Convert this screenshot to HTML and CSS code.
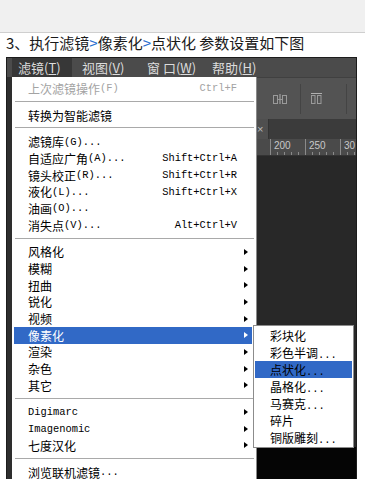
FILE: index.html
```html
<!DOCTYPE html>
<html lang="zh">
<head>
    <meta charset="UTF-8">
    <title>像素化 - 点状化</title>
    <link rel="stylesheet" href="styles.css">
</head>
<body>

    <div class="topband"></div>
    <p class="caption">3、执行滤镜<span class="gt">&gt;</span>像素化<span class="gt">&gt;</span>点状化 参数设置如下图</p>

    <div class="shot">
        <div class="menubar">
            <span class="mb-item active">滤镜(<u>T</u>)</span>
            <span class="mb-item">视图(<u>V</u>)</span>
            <span class="mb-item">窗 口(<u>W</u>)</span>
            <span class="mb-item">帮助(<u>H</u>)</span>
        </div>

        <div class="work">
            <div class="tools"></div>

            <!-- Filter menu -->
            <div class="menu">
                <div class="mi off">上次滤镜操作<span class="lat">(F)</span><span class="key">Ctrl+F</span></div>
                <div class="sep"></div>
                <div class="mi">转换为智能滤镜</div>
                <div class="sep"></div>
                <div class="mi">滤镜库 <span class="lat">(G)...</span></div>
                <div class="mi">自适应广角 <span class="lat">(A)...</span><span class="key">Shift+Ctrl+A</span></div>
                <div class="mi">镜头校正 <span class="lat">(R)...</span><span class="key">Shift+Ctrl+R</span></div>
                <div class="mi">液化 <span class="lat">(L)...</span><span class="key">Shift+Ctrl+X</span></div>
                <div class="mi">油画 <span class="lat">(O)...</span></div>
                <div class="mi">消失点 <span class="lat">(V)...</span><span class="key">Alt+Ctrl+V</span></div>
                <div class="sep"></div>
                <div class="mi">风格化<i class="arrow"></i></div>
                <div class="mi">模糊<i class="arrow"></i></div>
                <div class="mi">扭曲<i class="arrow"></i></div>
                <div class="mi">锐化<i class="arrow"></i></div>
                <div class="mi">视频<i class="arrow"></i></div>
                <div class="mi hl">像素化<i class="arrow"></i></div>
                <div class="mi">渲染<i class="arrow"></i></div>
                <div class="mi">杂色<i class="arrow"></i></div>
                <div class="mi">其它<i class="arrow"></i></div>
                <div class="sep"></div>
                <div class="mi"><span class="lat">Digimarc</span><i class="arrow"></i></div>
                <div class="mi"><span class="lat">Imagenomic</span><i class="arrow"></i></div>
                <div class="mi">七度汉化<i class="arrow"></i></div>
                <div class="sep"></div>
                <div class="mi">浏览联机滤镜<span class="lat">...</span></div>
            </div>

            <!-- Workspace on the right -->
            <div class="panel">
                <div class="toolbar">
                    <svg class="ico1" width="14" height="10" viewBox="0 0 14 10">
                        <rect x="0.5" y="1.5" width="4" height="8" fill="none" stroke="#9a9a9a"/>
                        <rect x="9.5" y="1.5" width="4" height="8" fill="none" stroke="#9a9a9a"/>
                        <line x1="7" y1="0" x2="7" y2="10" stroke="#b0b0b0"/>
                        <line x1="4" y1="5.5" x2="10" y2="5.5" stroke="#9a9a9a"/>
                    </svg>
                    <span class="vdiv"></span>
                    <svg class="ico2" width="11" height="11" viewBox="0 0 11 11">
                        <line x1="0" y1="0.5" x2="11" y2="0.5" stroke="#b0b0b0"/>
                        <rect x="0.5" y="2.5" width="3.5" height="8" fill="none" stroke="#9a9a9a"/>
                        <rect x="6.5" y="2.5" width="3.5" height="8" fill="none" stroke="#9a9a9a"/>
                    </svg>
                    <span class="vdiv last"></span>
                </div>
                <div class="tabs"><span class="tab">×</span></div>
                <div class="ruler">
                    <span class="mark">200</span>
                    <span class="mark">250</span>
                    <span class="mark">30</span>
                </div>
                <div class="canvas"></div>
                <div class="doc"></div>
            </div>

            <!-- Pixelate submenu -->
            <div class="submenu">
                <div class="si">彩块化</div>
                <div class="si">彩色半调<span class="lat">...</span></div>
                <div class="si hl">点状化<span class="lat">...</span></div>
                <div class="si">晶格化<span class="lat">...</span></div>
                <div class="si">马赛克<span class="lat">...</span></div>
                <div class="si">碎片</div>
                <div class="si">铜版雕刻<span class="lat">...</span></div>
            </div>
        </div>
    </div>

</body>
</html>
```

FILE: styles.css
```css
body {
    margin: 0;
    background: #fff;
    font-family: "Noto Sans CJK SC", sans-serif;
}
.topband {
    height: 32px;
    background: #f0f0f0;
    border-bottom: 1px solid #cfcfcf;
}
.caption {
    margin: 0;
    height: 24px;
    line-height: 20px;
    padding-left: 6px;
    font-size: 15px;
    color: #1a1a1a;
}
.gt {
    color: #2a6fd0;
}
.shot {
    position: relative;
    margin-left: 6px;
    width: 349px;
    height: 421px;
    border: 1px solid #1c1c1c;
    border-bottom: none;
    background: #282828;
    overflow: hidden;
}
.menubar {
    display: flex;
    height: 19px;
    padding-left: 5px;
    background: #4b4b4b;
}
.mb-item {
    flex: none;
    width: 65px;
    padding-left: 10px;
    box-sizing: border-box;
    color: #dcdcdc;
    font-size: 13px;
    line-height: 19px;
    white-space: nowrap;
}
.mb-item.active {
    width: 60px;
    padding-left: 6px;
    background: #373737;
}
.work {
    display: flex;
    height: 402px;
}
.tools {
    flex: none;
    width: 5px;
    background: #2e2e2e;
}
.menu {
    flex: none;
    width: 244px;
    padding-top: 3px;
    background: #fff;
    border-right: 1px solid #8a8a8a;
}
.mi {
    display: flex;
    align-items: center;
    height: 16.7px;
    margin: 0 4px 0 2px;
    padding: 0 3px 0 14px;
    font-size: 12px;
    color: #000;
    white-space: nowrap;
}
.mi.off {
    color: #a3a3a3;
}
.lat {
    font-family: "Liberation Mono", monospace;
    font-size: 10.4px;
}
.key {
    margin-left: auto;
    margin-right: 12px;
    font-family: "Liberation Mono", monospace;
    font-size: 10.4px;
}
.arrow {
    margin-left: auto;
    margin-right: 1px;
    width: 0;
    height: 0;
    border-left: 4px solid #000;
    border-top: 3.5px solid transparent;
    border-bottom: 3.5px solid transparent;
}
.sep {
    height: 1px;
    margin: 4px 2px 5px 3px;
    background: #a9a9a9;
}
.hl {
    background: #3169c6;
    color: #fff;
}
.hl .arrow {
    border-left-color: #fff;
}
.panel {
    flex: 1;
    min-width: 0;
    display: flex;
    flex-direction: column;
    overflow: hidden;
}
.toolbar {
    display: flex;
    align-items: center;
    height: 41px;
    padding-left: 16px;
    background: #535353;
    border-top: 1px solid #404040;
}
.toolbar svg {
    flex: none;
}
.vdiv {
    flex: none;
    width: 1px;
    height: 30px;
    margin: 0 10px 0 13px;
    background: #444;
}
.vdiv.last {
    margin-left: 24px;
}
.tabs {
    height: 20px;
    background: #3b3b3b;
}
.tab {
    display: block;
    width: 11px;
    height: 20px;
    background: #4f4f4f;
    border-right: 1px solid #333;
    color: #bbb;
    font-family: "Liberation Sans", sans-serif;
    font-size: 11px;
    line-height: 20px;
}
.ruler {
    display: flex;
    height: 16px;
    padding-left: 13px;
    background: #4a4a4a repeating-linear-gradient(90deg, #8a8a8a 0 1px, transparent 1px 7px) 13px 13px / 100% 3px no-repeat;
    border-bottom: 1px solid #333;
}
.mark {
    flex: none;
    width: 35px;
    padding-left: 3px;
    box-sizing: border-box;
    border-left: 1px solid #8a8a8a;
    color: #c8c8c8;
    font-family: "Liberation Sans", sans-serif;
    font-size: 10px;
    line-height: 13px;
}
.canvas {
    flex: 1;
    background: #282828;
}
.doc {
    height: 32px;
    background: #050505;
}
.submenu {
    position: absolute;
    left: 246px;
    top: 267px;
    width: 99px;
    padding: 1px 0;
    background: #fff;
    border: 1px solid #8c8c8c;
}
.si {
    height: 17px;
    margin: 0 1px;
    padding-left: 15px;
    font-size: 12px;
    line-height: 17px;
    color: #000;
    white-space: nowrap;
}
```
